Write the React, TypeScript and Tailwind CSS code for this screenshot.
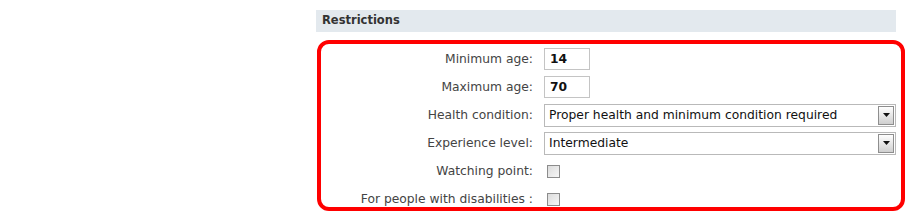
const font = { fontFamily: '"DejaVu Sans", Verdana, sans-serif' };

function Label({ children }: { children: React.ReactNode }) {
  return (
    <div className="w-[223px] shrink-0 pr-[11px] text-right text-[12.3px] text-[#444]">
      {children}
    </div>
  );
}

function TextBox({ value }: { value: string }) {
  return (
    <div className="flex h-[22px] w-[46px] items-center border border-[#c4c4c4] bg-white pl-[5px] text-[12.3px] font-bold text-[#111]">
      {value}
    </div>
  );
}

function Select({ value }: { value: string }) {
  return (
    <div className="flex h-[23px] w-[352px] items-center border border-[#b9b9b9] bg-white pl-[4px] pr-[1px] text-[12.3px] text-[#111]">
      <span className="flex-1 truncate">{value}</span>
      <span className="flex h-[19px] w-[16px] items-center justify-center border border-[#8e8e8e] bg-gradient-to-b from-white to-[#cfcfcf]">
        <svg width="7" height="4" viewBox="0 0 7 4">
          <path d="M0 0h7L3.5 4z" fill="#111" />
        </svg>
      </span>
    </div>
  );
}

function Checkbox() {
  return (
    <span className="ml-[3px] block h-[13px] w-[13px] border border-[#8c8c8c] bg-gradient-to-br from-[#dcdcdc] to-[#f6f6f6]" />
  );
}

export default function App() {
  return (
    <div className="h-[212px] w-[923px] overflow-hidden bg-white pl-[316px] pt-[10px]" style={font}>
      <div className="flex h-[22px] w-[580px] items-center bg-[#e3e9ee] pl-[6px] text-[11.5px] font-bold text-[#333]">
        Restrictions
      </div>
      <div className="ml-[1px] mt-[8px] w-[588px] rounded-[12px] border-4 border-[#f00] pt-[1px]">
        <div className="flex h-[28px] items-center">
          <Label>Minimum age:</Label>
          <TextBox value="14" />
        </div>
        <div className="flex h-[28px] items-center">
          <Label>Maximum age:</Label>
          <TextBox value="70" />
        </div>
        <div className="flex h-[28px] items-center">
          <Label>Health condition:</Label>
          <Select value="Proper health and minimum condition required" />
        </div>
        <div className="flex h-[28px] items-center">
          <Label>Experience level:</Label>
          <Select value="Intermediate" />
        </div>
        <div className="flex h-[28px] items-center">
          <Label>Watching point:</Label>
          <Checkbox />
        </div>
        <div className="flex h-[22px] items-center pt-[6px]">
          <Label>For people with disabilities :</Label>
          <Checkbox />
        </div>
      </div>
    </div>
  );
}
